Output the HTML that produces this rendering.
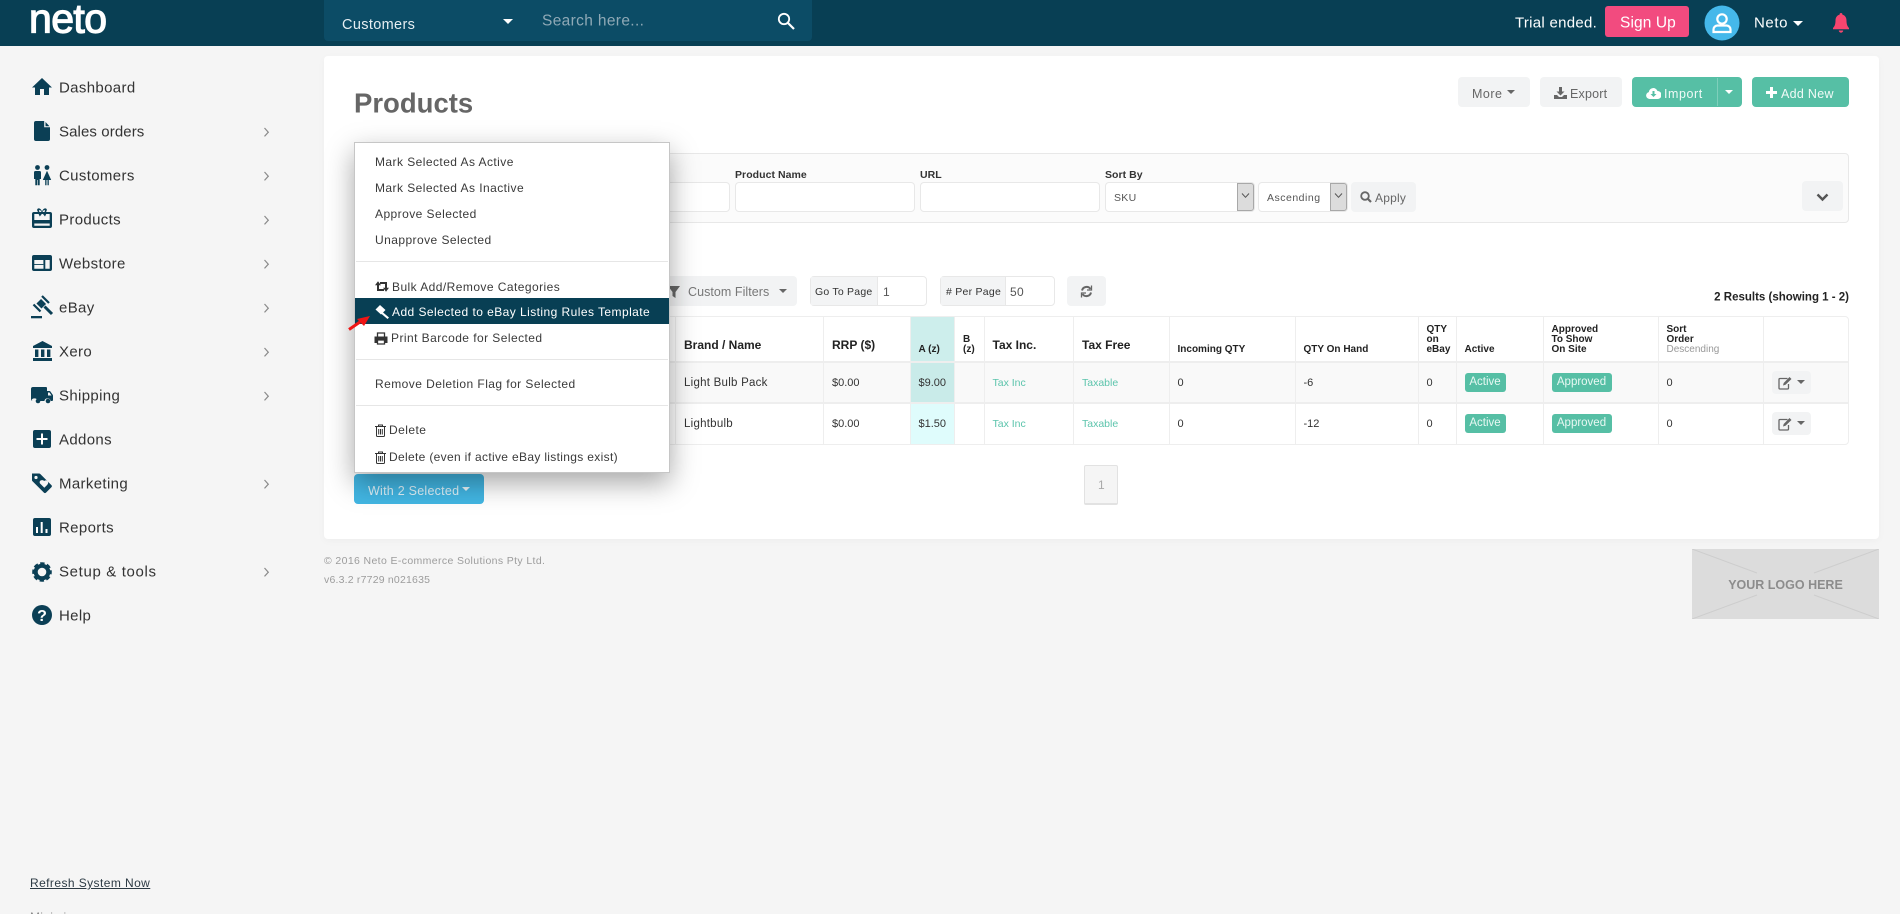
<!DOCTYPE html>
<html><head><meta charset="utf-8"><title>Products</title>
<style>
*{box-sizing:border-box}
html,body{margin:0;padding:0;width:1900px;height:914px;overflow:hidden;background:#f5f5f5;font-family:"Liberation Sans",sans-serif;color:#333}
#w{position:relative;width:1900px;height:914px;overflow:hidden}
.a{position:absolute}
.t{position:absolute;white-space:nowrap;line-height:1;transform:translateY(-50%)}
.btn{position:absolute;border-radius:4px;background:#f2f3f4}
.nav{font-size:15px;letter-spacing:.35px;left:59px;color:#333}
.sw{left:375px;font-size:12px;letter-spacing:.44px;color:#3a3a3a}
.lab{font-size:10.5px;font-weight:bold;color:#333;top:175px;letter-spacing:.05px}
.inp{position:absolute;top:182px;height:30px;background:#fff;border:1px solid #e8e8e8;border-radius:4px}
table{position:absolute;left:354px;top:316px;width:1495px;border-collapse:separate;border-spacing:0;table-layout:fixed;border:1px solid #eee;border-radius:4px;background:#fff;font-size:11px;color:#333}
td,th{padding:0 0 0 8px;border-right:1px solid #eee;border-bottom:2px solid #eee;text-align:left;overflow:hidden;white-space:nowrap}
tr>*:last-child{border-right:0}
tr:last-child td{border-bottom:0;height:40px}
th{height:46px;vertical-align:bottom;font-size:10px;line-height:10px;padding-bottom:6px;color:#222}
th.b{font-size:12px;line-height:14px;padding-bottom:9px}
td{height:41px;vertical-align:middle;padding-bottom:1px}
tr.r1 td{background:#f9f9f9;padding-bottom:0}
td.n{font-size:11.5px;letter-spacing:.25px}
td.g{font-size:10.5px;color:#5cc4ac}
.badge{display:inline-block;height:19px;line-height:19px;background:#56bfa5;color:#e8f8f3;border-radius:3px;font-size:11.5px;padding:0 4px;text-align:center}
.ed{display:inline-block;width:39px;height:23px;background:#f2f3f4;border-radius:4px;position:relative;vertical-align:middle}
.car{position:absolute;width:0;height:0;border-left:4px solid transparent;border-right:4px solid transparent;border-top:4px solid #666}
</style></head><body><div id="w">

<!-- header -->
<div class="a" style="left:0;top:0;width:1900px;height:46px;background:#083f54"></div>
<div class="t" style="left:29px;top:19px;font-size:41px;font-weight:normal;color:#fff;letter-spacing:-.6px;-webkit-text-stroke:1.2px #fff">neto</div>
<div class="a" style="left:324px;top:0;width:488px;height:41px;background:#0c4c66;border-radius:0 0 4px 4px"></div>
<div class="t" style="left:342px;top:25px;font-size:14.5px;letter-spacing:.35px;color:#e6eef2">Customers</div>
<div class="car" style="left:503px;top:19px;border-top-color:#fff;border-left-width:5px;border-right-width:5px;border-top-width:5px"></div>
<div class="t" style="left:542px;top:21px;font-size:15.5px;letter-spacing:.35px;color:#8fa9b6">Search here...</div>
<svg class="a" style="left:777px;top:12px" width="18" height="18" viewBox="0 0 18 18"><circle cx="7" cy="7" r="5.2" fill="none" stroke="#fff" stroke-width="1.8"/><path d="M11 11l6 6" stroke="#fff" stroke-width="2.2"/></svg>

<div class="t" style="left:1515px;top:23px;font-size:15px;letter-spacing:.28px;color:#fff">Trial ended.</div>
<div class="a" style="left:1605px;top:6px;width:84px;height:31px;background:#f24b7f;border-radius:3px"></div>
<div class="t" style="left:1620px;top:23px;font-size:15.5px;letter-spacing:.1px;color:#fff">Sign Up</div>
<svg class="a" style="left:1704px;top:5px" width="36" height="36" viewBox="0 0 36 36"><circle cx="18" cy="18" r="17.5" fill="#45b8ea"/><circle cx="18" cy="14" r="4.7" fill="none" stroke="#fff" stroke-width="2.2"/><path d="M9.5 27v-2.5a4 4 0 0 1 4-4h9a4 4 0 0 1 4 4V27z" fill="none" stroke="#fff" stroke-width="2.2"/></svg>
<div class="t" style="left:1754px;top:23px;font-size:15px;letter-spacing:.6px;color:#fff">Neto</div>
<div class="car" style="left:1793px;top:21px;border-top-color:#fff;border-left-width:5px;border-right-width:5px;border-top-width:5px"></div>
<svg class="a" style="left:1832px;top:13px" width="18" height="20" viewBox="0 0 18 20"><path d="M9 0a1.500 1.500 0 0 1 1.400 1.600C13 2.300 14.500 4.500 14.500 7.500c0 4 1 6 2.500 7.500v1.300H1V15c1.500-1.500 2.500-3.500 2.500-7.500 0-3 1.500-5.200 4.100-5.900A1.500 1.500 0 0 1 9 0z" fill="#f8456f"/><path d="M6.800 17.500h4.400a2.200 2.200 0 0 1-4.400 0z" fill="#f8456f"/></svg>

<!-- sidebar icons -->
<svg class="a" style="left:0;top:0" width="320" height="914" viewBox="0 0 320 914" fill="#0b3f55">
<path d="M42 78L52 87.500H49V95H44V89H40V95H35V87.500H32Z"/>
<path d="M36 121H44.500L50 127V139a2 2 0 0 1-2 2H36a2 2 0 0 1-2-2V123a2 2 0 0 1 2-2z"/><path d="M44.500 121V127H50z" fill="#f5f5f5" stroke="#f5f5f5" stroke-width=".6"/><path d="M45.500 122V126.200H49.500z" fill="#0b3f55"/>
<circle cx="37.500" cy="167.500" r="2.400"/><circle cx="47" cy="167.500" r="2.400"/>
<path d="M35.500 171h4a1.500 1.500 0 0 1 1.500 1.500V179h-1.300v6.300h-1.900V180h-.6v5.300h-1.900V179H34v-6.500a1.500 1.500 0 0 1 1.500-1.500zM47 170.800l4.200 9.200h-2.400v5.300h-1.300V180h-1v5.300h-1.300V180h-2.400z"/>
<path fill-rule="evenodd" d="M34 212h16a2 2 0 0 1 2 2v12a2 2 0 0 1-2 2H34a2 2 0 0 1-2-2v-12a2 2 0 0 1 2-2zm.3 2v6h15.400v-6h-3.500l-1.200 2.500-2-2.500h-1.200l-2 2.500-1.200-2.500zm0 9.500v2.300h15.400v-2.300z"/>
<path d="M38 212c-2-3 0-4 1.500-3.500 1 .3 2 1.500 2.500 3 .5-1.500 1.500-2.700 2.500-3 1.500-.5 3.500.5 1.500 3.500h-1.500c1-1.500.3-2-.5-1.800-.7.2-1.200 1-1.500 1.800h-1c-.3-.8-.8-1.600-1.500-1.800-.8-.2-1.500.3-.5 1.800z"/>
<path fill-rule="evenodd" d="M34 255h16a2 2 0 0 1 2 2v12a2 2 0 0 1-2 2H34a2 2 0 0 1-2-2v-12a2 2 0 0 1 2-2zm.300 5v8.800h9.200V265h-.1v-5zm11 0v8.800h4.400V260zm-11 4h9.200v.9h-9.200z"/>
<path d="M46.050 303.950L41.050 298.950L36.450 303.550L41.450 308.550Z"/><path d="M42 296L49 303M33.500 304.500L40.500 311.500" stroke="#0b3f55" stroke-width="2.200"/><path d="M44.500 306.500L52 314" stroke="#0b3f55" stroke-width="3"/><path d="M31 316h11v2.300H31z"/>
<path d="M42.500 341L52 346v2H33v-2zM35 349.500h3.400v7.500H35zM41 349.500h3.400v7.500H41zM47 349.500h3.400v7.500H47zM33 358h19v3H33z"/>
<path d="M33 387h13a1 1 0 0 1 1 1v3h2.500a1 1 0 0 1 .8.400l2.400 3.400c.2.300.3.600.3.900V400a1 1 0 0 1-1 1h-1.300a3.200 3.200 0 0 0-6.300 0h-6.800a3.200 3.200 0 0 0-6.300 0H33a2 2 0 0 1-2-2v-10a2 2 0 0 1 2-2z"/><circle cx="38" cy="401" r="2.300"/><circle cx="48" cy="401" r="2.300"/><path d="M48 392.500h1.500l2 3H48z" fill="#f5f5f5"/>
<rect x="33" y="430" width="18" height="18" rx="2"/><path d="M41 433.500h2v4.500h4.500v2H43v4.500h-2V440h-4.500v-2H41z" fill="#fff"/>
<path fill-rule="evenodd" d="M32 473.500h7a2 2 0 0 1 1.400.6l11 11a1.500 1.500 0 0 1 0 2.100l-5.400 5.400a1.500 1.500 0 0 1-2.100 0l-11.500-11.500a1 1 0 0 1-.4-.8z"/><circle cx="36" cy="477.500" r="1.600" fill="#f5f5f5"/><path d="M44.800 480c1-1 3.300-.8 3.800 1 .4 1.400-.5 2.500-1.500 3.500l-2.300 2.300-4-4c-1-1.200-.8-2.600.3-3.300 1-.6 2.500-.6 3.700.500z" fill="#f5f5f5" transform="translate(-.500 1)"/>
<rect x="33" y="518" width="18" height="18" rx="2"/><path d="M36 527h2v6h-2zM40.700 522h2v11h-2zM45.500 529h2v4h-2z" fill="#fff"/>
<circle cx="42" cy="572" r="6.300" fill="none" stroke="#0b3f55" stroke-width="4"/><circle cx="42" cy="572" r="8.300" fill="none" stroke="#0b3f55" stroke-width="3" stroke-dasharray="4.200 2.320" stroke-dashoffset="2"/>
<circle cx="42" cy="615" r="10"/>
<text x="42" y="621" text-anchor="middle" font-family="Liberation Sans" font-weight="bold" font-size="16" fill="#fff">?</text>
<g fill="none" stroke="#8a8a8a" stroke-width="1.200"><path d="M264.500 128l3.800 4.200-3.800 4.200M264.500 172l3.800 4.200-3.800 4.200M264.500 216l3.800 4.200-3.800 4.200M264.500 260l3.800 4.200-3.800 4.200M264.500 304l3.800 4.200-3.800 4.200M264.500 348l3.800 4.200-3.800 4.200M264.500 392l3.800 4.200-3.800 4.200M264.500 480l3.800 4.200-3.800 4.200M264.500 568l3.800 4.200-3.800 4.200"/></g>
</svg>
<div class="t nav" style="top:88px">Dashboard</div>
<div class="t nav" style="top:132px;letter-spacing:.1px">Sales orders</div>
<div class="t nav" style="top:176px">Customers</div>
<div class="t nav" style="top:220px">Products</div>
<div class="t nav" style="top:264px">Webstore</div>
<div class="t nav" style="top:308px">eBay</div>
<div class="t nav" style="top:352px">Xero</div>
<div class="t nav" style="top:396px">Shipping</div>
<div class="t nav" style="top:440px">Addons</div>
<div class="t nav" style="top:484px">Marketing</div>
<div class="t nav" style="top:528px">Reports</div>
<div class="t nav" style="top:572px;letter-spacing:.65px">Setup &amp; tools</div>
<div class="t nav" style="top:616px">Help</div>
<div class="t" style="left:30px;top:883px;font-size:12px;letter-spacing:.42px;text-decoration:underline;color:#2c3a44">Refresh System Now</div>
<div class="t" style="left:30px;top:917px;font-size:12px;letter-spacing:.3px;color:#888">Minimize menu</div>

<!-- panel -->
<div class="a" style="left:324px;top:56px;width:1555px;height:483px;background:#fff;border-radius:4px;box-shadow:0 2px 8px rgba(0,0,0,.03)"></div>
<div class="t" style="left:354px;top:103px;font-size:27.5px;font-weight:bold;color:#666">Products</div>

<div class="btn" style="left:1458px;top:77px;width:72px;height:30px"></div>
<div class="t" style="left:1472px;top:94px;font-size:12.5px;letter-spacing:.5px;color:#666">More</div>
<div class="car" style="left:1507px;top:90px"></div>
<div class="btn" style="left:1540px;top:77px;width:82px;height:30px"></div>
<svg class="a" style="left:1554px;top:87px" width="13" height="12" viewBox="0 0 13 12" fill="#666"><path d="M5 0h3v4.500h2.500L6.500 8.500 2.500 4.500H5zM0 8h3l2 2h3l2-2h3v4H0z"/></svg>
<div class="t" style="left:1570px;top:94px;font-size:12.5px;letter-spacing:.2px;color:#666">Export</div>
<div class="a" style="left:1632px;top:77px;width:110px;height:30px;background:#56bfa5;border-radius:4px"></div>
<div class="a" style="left:1717px;top:78px;width:1px;height:28px;background:#7fcfbb"></div>
<svg class="a" style="left:1646px;top:87px" width="15" height="12" viewBox="0 0 15 12"><path d="M3.500 12a3.500 3.500 0 0 1-.7-6.900A4.500 4.500 0 0 1 11.500 4a4 4 0 0 1 0 8z" fill="#fff"/><path d="M6.500 4h2v3h2L7.500 10 4.500 7h2z" fill="#56bfa5"/></svg>
<div class="t" style="left:1664px;top:94px;font-size:12.5px;letter-spacing:.55px;color:#f0faf7">Import</div>
<div class="car" style="left:1725px;top:90px;border-top-color:#fff"></div>
<div class="a" style="left:1752px;top:77px;width:97px;height:30px;background:#56bfa5;border-radius:4px"></div>
<svg class="a" style="left:1766px;top:87px" width="11" height="11" viewBox="0 0 11 11"><path d="M4 0h3v4h4v3H7v4H4V7H0V4h4z" fill="#fff"/></svg>
<div class="t" style="left:1781px;top:94px;font-size:12.5px;letter-spacing:.3px;color:#f0faf7">Add New</div>

<!-- filter box -->
<div class="a" style="left:354px;top:153px;width:1495px;height:70px;background:#fbfbfb;border:1px solid #e8e8e8;border-radius:4px"></div>
<div class="inp" style="left:560px;width:170px"></div>
<div class="t lab" style="left:735px">Product Name</div>
<div class="inp" style="left:735px;width:180px"></div>
<div class="t lab" style="left:920px">URL</div>
<div class="inp" style="left:920px;width:180px"></div>
<div class="t lab" style="left:1105px">Sort By</div>
<div class="inp" style="left:1105px;width:150px"></div>
<div class="a" style="left:1237px;top:183px;width:17px;height:28px;background:#dcdcdc;border:1px solid #a8a8a8;border-radius:0 3px 3px 0"></div>
<svg class="a" style="left:1241px;top:192px" width="9" height="7" viewBox="0 0 9 7"><path d="M1 1.500l3.500 3.800L8 1.500" fill="none" stroke="#555" stroke-width="1"/></svg>
<div class="t" style="left:1114px;top:198px;font-size:10.5px;letter-spacing:.3px;color:#555">SKU</div>
<div class="inp" style="left:1258px;width:90px"></div>
<div class="a" style="left:1330px;top:183px;width:17px;height:28px;background:#dcdcdc;border:1px solid #a8a8a8;border-radius:0 3px 3px 0"></div>
<svg class="a" style="left:1334px;top:192px" width="9" height="7" viewBox="0 0 9 7"><path d="M1 1.500l3.500 3.800L8 1.500" fill="none" stroke="#555" stroke-width="1"/></svg>
<div class="t" style="left:1267px;top:198px;font-size:10.5px;letter-spacing:.5px;color:#555">Ascending</div>
<div class="btn" style="left:1351px;top:182px;width:65px;height:30px"></div>
<svg class="a" style="left:1360px;top:191px" width="12" height="12" viewBox="0 0 12 12"><circle cx="5" cy="5" r="3.800" fill="none" stroke="#666" stroke-width="1.800"/><path d="M8 8l3 3" stroke="#666" stroke-width="2.200"/></svg>
<div class="t" style="left:1375px;top:198px;font-size:12px;letter-spacing:.2px;color:#666">Apply</div>
<div class="btn" style="left:1802px;top:181px;width:41px;height:30px"></div>
<svg class="a" style="left:1816px;top:193px" width="13" height="9" viewBox="0 0 13 9"><path d="M1.500 1.500l5 5 5-5" fill="none" stroke="#555" stroke-width="2.400"/></svg>

<!-- toolbar -->
<div class="btn" style="left:560px;top:276px;width:237px;height:30px"></div>
<svg class="a" style="left:668px;top:286px" width="12" height="12" viewBox="0 0 12 12"><path d="M0 0h12L7.500 6v6L4.500 10V6z" fill="#666"/></svg>
<div class="t" style="left:688px;top:292px;font-size:12.5px;letter-spacing:.05px;color:#777">Custom Filters</div>
<div class="car" style="left:779px;top:289px"></div>
<div class="a" style="left:810px;top:276px;width:117px;height:30px;background:#fff;border:1px solid #e8e8e8;border-radius:4px"></div>
<div class="a" style="left:811px;top:277px;width:67px;height:28px;background:#f3f4f5;border-right:1px solid #e8e8e8"></div>
<div class="t" style="left:815px;top:292px;font-size:10.5px;letter-spacing:.22px;color:#333">Go To Page</div>
<div class="t" style="left:883px;top:292px;font-size:12px;letter-spacing:.3px;color:#555">1</div>
<div class="a" style="left:940px;top:276px;width:115px;height:30px;background:#fff;border:1px solid #e8e8e8;border-radius:4px"></div>
<div class="a" style="left:941px;top:277px;width:65px;height:28px;background:#f3f4f5;border-right:1px solid #e8e8e8"></div>
<div class="t" style="left:946px;top:292px;font-size:10.5px;letter-spacing:.25px;color:#333"># Per Page</div>
<div class="t" style="left:1010px;top:292px;font-size:12px;letter-spacing:.3px;color:#555">50</div>
<div class="btn" style="left:1067px;top:276px;width:39px;height:30px"></div>
<svg class="a" style="left:1080px;top:285px" width="13" height="13" viewBox="0 0 13 13" fill="none" stroke="#666" stroke-width="2"><path d="M2 5.500A4.700 4.700 0 0 1 10.500 4M11 7.500A4.700 4.700 0 0 1 2.500 9"/><path d="M11.500 .5v4.500H7M1.500 12.500V8H6" stroke-width="1.300"/></svg>
<div class="t" style="right:51px;top:298px;font-size:11.5px;font-weight:bold;letter-spacing:0;color:#222">2 Results (showing 1 - 2)</div>

<!-- table -->
<table>
<colgroup><col style="width:321px"><col style="width:148px"><col style="width:86.5px"><col style="width:44.5px"><col style="width:29.5px"><col style="width:89.5px"><col style="width:95.5px"><col style="width:126px"><col style="width:123px"><col style="width:38px"><col style="width:87px"><col style="width:115px"><col style="width:105px"><col></colgroup>
<tr>
<th></th><th class="b">Brand / Name</th><th class="b">RRP ($)</th><th style="background:#cdeeec">A (z)</th><th>B<br>(z)</th><th class="b">Tax Inc.</th><th class="b">Tax Free</th><th>Incoming QTY</th><th>QTY On Hand</th><th>QTY<br>on<br>eBay</th><th>Active</th><th>Approved<br>To Show<br>On Site</th><th>Sort<br>Order<br><span style="color:#999;font-weight:normal">Descending</span></th><th></th>
</tr>
<tr class="r1">
<td></td><td class="n">Light Bulb Pack</td><td>$0.00</td><td style="background:#c9ebe9">$9.00</td><td></td><td class="g">Tax Inc</td><td class="g">Taxable</td><td>0</td><td>-6</td><td>0</td><td><span class="badge" style="width:41px">Active</span></td><td><span class="badge" style="width:60px">Approved</span></td><td>0</td><td><span class="ed"><svg class="a" style="left:6px;top:5px" width="14" height="14" viewBox="0 0 14 14"><path d="M9.500 2.500H2a1 1 0 0 0-1 1V12a1 1 0 0 0 1 1h7.500a1 1 0 0 0 1-1V8" fill="none" stroke="#666" stroke-width="1.300"/><path d="M5 9.500l.7-2.500L11.500 1l2 2-6 5.800z" fill="#666"/></svg><span class="car" style="left:25px;top:9px"></span></span></td>
</tr>
<tr>
<td></td><td class="n">Lightbulb</td><td>$0.00</td><td style="background:#dffcfc">$1.50</td><td></td><td class="g">Tax Inc</td><td class="g">Taxable</td><td>0</td><td>-12</td><td>0</td><td><span class="badge" style="width:41px">Active</span></td><td><span class="badge" style="width:60px">Approved</span></td><td>0</td><td><span class="ed"><svg class="a" style="left:6px;top:5px" width="14" height="14" viewBox="0 0 14 14"><path d="M9.500 2.500H2a1 1 0 0 0-1 1V12a1 1 0 0 0 1 1h7.500a1 1 0 0 0 1-1V8" fill="none" stroke="#666" stroke-width="1.300"/><path d="M5 9.500l.7-2.500L11.500 1l2 2-6 5.800z" fill="#666"/></svg><span class="car" style="left:25px;top:9px"></span></span></td>
</tr>
</table>

<div class="a" style="left:1084px;top:465px;width:34px;height:40px;background:#f5f5f5;border:1px solid #e2e2e2;border-bottom-width:2px;border-radius:2px"></div>
<div class="t" style="left:1098px;top:485px;font-size:12px;color:#aaa">1</div>

<!-- with selected -->
<div class="a" style="left:354px;top:474px;width:130px;height:30px;background:#42b6e3;border-radius:4px"></div>
<div class="t" style="left:368px;top:491px;font-size:12.5px;letter-spacing:.25px;color:#dff2fa">With 2 Selected</div>
<div class="car" style="left:462px;top:487px;border-top-color:#eaf7fc"></div>

<!-- dropdown -->
<div class="a" style="left:354px;top:142px;width:316px;height:331px;background:#fff;border:1px solid #c6c6c6;box-shadow:0 10px 26px rgba(0,0,0,.35)"></div>
<div class="a" style="left:356px;top:261px;width:312px;height:1px;background:#e6e6e6"></div>
<div class="a" style="left:356px;top:359px;width:312px;height:1px;background:#e6e6e6"></div>
<div class="a" style="left:356px;top:405px;width:312px;height:1px;background:#e6e6e6"></div>
<div class="a" style="left:355px;top:298px;width:314px;height:26px;background:#083f54"></div>
<div class="t sw" style="top:162px">Mark Selected As Active</div>
<div class="t sw" style="top:188px">Mark Selected As Inactive</div>
<div class="t sw" style="top:214px">Approve Selected</div>
<div class="t sw" style="top:240px">Unapprove Selected</div>
<svg class="a" style="left:375px;top:281px" width="14" height="11" viewBox="0 0 14 11" fill="#333"><path d="M3 4v5h6" fill="none" stroke="#333" stroke-width="2"/><path d="M0 4.300h6L3 .3zM8 6.700h6l-3 4z"/><path d="M11 7V2H5" fill="none" stroke="#333" stroke-width="2"/></svg>
<div class="t sw" style="left:392px;top:287px">Bulk Add/Remove Categories</div>
<svg class="a" style="left:375px;top:305px" width="14" height="14" viewBox="0 0 14 14" fill="#fff"><path d="M5 0L10.500 5 6 9.500 .5 4.500zM7.500 7L14 12.500 12.500 14 6 8.500z"/></svg>
<div class="t sw" style="left:392px;top:312px;color:#fff">Add Selected to eBay Listing Rules Template</div>
<svg class="a" style="left:374px;top:332px" width="14" height="13" viewBox="0 0 14 13" fill="none" stroke="#333"><path d="M3.500 5V1h7v4" stroke-width="1.300"/><path d="M1 5h12v5.500h-2V8H3v2.500H1z" fill="#333"/><path d="M3.500 8h7v4h-7z" stroke-width="1.300"/></svg>
<div class="t sw" style="left:391px;top:338px">Print Barcode for Selected</div>
<div class="t sw" style="top:384px">Remove Deletion Flag for Selected</div>
<svg class="a" style="left:375px;top:424px" width="11" height="13" viewBox="0 0 11 13" fill="none" stroke="#333"><path d="M0 2.500h11M3.500 2.500V1h4v1.500"/><path d="M1.500 2.500V11.500a1 1 0 0 0 1 1h6a1 1 0 0 0 1-1V2.500M3.700 5v5.500M5.500 5v5.500M7.300 5v5.500"/></svg>
<div class="t sw" style="left:389px;top:430px">Delete</div>
<svg class="a" style="left:375px;top:451px" width="11" height="13" viewBox="0 0 11 13" fill="none" stroke="#333"><path d="M0 2.500h11M3.500 2.500V1h4v1.500"/><path d="M1.500 2.500V11.500a1 1 0 0 0 1 1h6a1 1 0 0 0 1-1V2.500M3.700 5v5.500M5.500 5v5.500M7.300 5v5.500"/></svg>
<div class="t sw" style="left:389px;top:457px;letter-spacing:.33px">Delete (even if active eBay listings exist)</div>
<svg class="a" style="left:347px;top:313px" width="24" height="20" viewBox="0 0 24 20"><path d="M2 16.500L13 9" stroke="#f01515" stroke-width="3"/><path d="M23 3L10 6l7 7z" fill="#f01515"/></svg>

<!-- footer -->
<div class="t" style="left:324px;top:561px;font-size:10.5px;letter-spacing:.37px;color:#9c9c9c">© 2016 Neto E-commerce Solutions Pty Ltd.</div>
<div class="t" style="left:324px;top:580px;font-size:10.5px;letter-spacing:.2px;color:#9c9c9c">v6.3.2 r7729 n021635</div>

<svg class="a" style="left:1692px;top:549px" width="187" height="70" viewBox="0 0 187 70"><rect width="187" height="70" fill="#dcdcdc"/><path d="M0 0L65 24M187 0L122 24M0 70L65 46M187 70L122 46" stroke="#cdcdcd" stroke-width="1"/><text x="93.5" y="40" text-anchor="middle" font-family="Liberation Sans" font-weight="bold" font-size="12.5" fill="#8c8c8c">YOUR LOGO HERE</text></svg>
</div></body></html>
